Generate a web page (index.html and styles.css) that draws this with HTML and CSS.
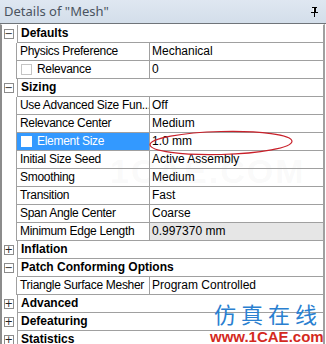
FILE: index.html
```html
<!DOCTYPE html>
<html lang="en">
<head>
    <meta charset="UTF-8">
    <title>Details of "Mesh"</title>
    <link rel="stylesheet" href="styles.css">
</head>
<body>
<div class="panel">
    <div class="title-bar">
        <span class="title">Details of "Mesh"</span>
        <svg class="pin" width="9" height="11" viewBox="0 0 9 11">
            <path d="M2 1h5v1h-1v4h2v1h-3v4h-1v-4h-3v-1h2v-4h-1z" fill="#000"/>
            <rect x="3" y="2" width="1" height="4" fill="#fff"/>
        </svg>
    </div>
    <div class="grid">
        <div class="row section"><span class="toggle">−</span><span class="cap">Defaults</span></div>
        <div class="row"><span class="gut"></span><span class="name">Physics Preference</span><span class="val">Mechanical</span></div>
        <div class="row"><span class="gut"></span><span class="name"><i class="check"></i>Relevance</span><span class="val">0</span></div>

        <div class="row section"><span class="toggle">−</span><span class="cap">Sizing</span></div>
        <div class="row"><span class="gut"></span><span class="name">Use Advanced Size Fun...</span><span class="val">Off</span></div>
        <div class="row"><span class="gut"></span><span class="name">Relevance Center</span><span class="val">Medium</span></div>
        <div class="row"><span class="gut"></span><span class="name selected"><i class="check"></i>Element Size</span><span class="val">1.0 mm</span></div>
        <div class="row"><span class="gut"></span><span class="name">Initial Size Seed</span><span class="val">Active Assembly</span></div>
        <div class="row"><span class="gut"></span><span class="name">Smoothing</span><span class="val">Medium</span></div>
        <div class="row"><span class="gut"></span><span class="name">Transition</span><span class="val">Fast</span></div>
        <div class="row"><span class="gut"></span><span class="name">Span Angle Center</span><span class="val">Coarse</span></div>
        <div class="row"><span class="gut"></span><span class="name">Minimum Edge Length</span><span class="val readonly">0.997370 mm</span></div>

        <div class="row section"><span class="toggle">+</span><span class="cap">Inflation</span></div>
        <div class="row section"><span class="toggle">−</span><span class="cap">Patch Conforming Options</span></div>
        <div class="row"><span class="gut"></span><span class="name">Triangle Surface Mesher</span><span class="val">Program Controlled</span></div>
        <div class="row section"><span class="toggle">+</span><span class="cap">Advanced</span></div>
        <div class="row section"><span class="toggle">+</span><span class="cap">Defeaturing</span></div>
        <div class="row section"><span class="toggle">+</span><span class="cap">Statistics</span></div>
    </div>

    <svg class="mark-ellipse" width="150" height="28" viewBox="0 0 150 28">
        <ellipse cx="74" cy="14" rx="71" ry="11.5" fill="none" stroke="#c8202a" stroke-width="1.2" transform="rotate(-1.5 74 14)"/>
    </svg>
    <div class="wm-faint">1CAE.COM</div>
    <div class="wm-cn">仿真在线</div>
    <div class="wm-url">www.1CAE.com</div>
</div>
</body>
</html>
```

FILE: styles.css
```css
* {
    margin: 0;
    padding: 0;
    box-sizing: border-box;
}

body {
    background: #ffffff;
    font-family: "Liberation Sans", Arial, sans-serif;
    font-size: 12px;
    color: #000000;
}

.panel {
    position: relative;
    width: 326px;
    height: 344px;
    overflow: hidden;
}

.title-bar {
    height: 24px;
    display: flex;
    align-items: center;
    justify-content: space-between;
    padding: 0 7px 1px 4px;
    background: linear-gradient(#dfe7f1, #d3deea);
    border-bottom: 1px solid #6f7479;
}

.title {
    font-family: "Noto Sans", sans-serif;
    font-size: 13px;
    color: #4a5360;
}

.pin {
    margin-top: 1px;
}

.grid {
    width: 325px;
    border-top: 1px solid #ffffff;
    border-left: 2px solid #8c8c8c;
    border-right: 2px solid #a0a0a0;
}

.row {
    display: grid;
    grid-template-columns: 15px 133px 1fr;
    height: 18px;
}

.gut {
    border-right: 1px solid #a0a0a0;
}

.name,
.val,
.cap {
    display: flex;
    align-items: center;
    border-bottom: 1px solid #a0a0a0;
    white-space: nowrap;
    overflow: hidden;
    padding-left: 3px;
    line-height: 17px;
}

.name {
    border-right: 1px solid #a0a0a0;
    letter-spacing: -0.3px;
}

.val {
    padding-left: 2px;
}

.readonly {
    background: #e6e6e6;
}

.selected {
    background: #3399ff;
    color: #ffffff;
}

.check {
    display: inline-block;
    width: 11px;
    height: 11px;
    margin: 0 5px 0 1px;
    border: 1px solid #c4c4c4;
    background: #ffffff;
}

.selected .check {
    border-color: #ffffff;
}

.section .cap {
    grid-column: 2 / 4;
    font-weight: bold;
    border-left: 1px solid #a0a0a0;
}

.toggle {
    align-self: center;
    justify-self: center;
    width: 10px;
    height: 10px;
    margin-left: -2px;
    border: 1px solid #8c8c8c;
    background: #ffffff;
    font-size: 10px;
    line-height: 8px;
    text-align: center;
    color: #222222;
    font-family: "DejaVu Sans", sans-serif;
}

.mark-ellipse {
    position: absolute;
    left: 147px;
    top: 129px;
}

.wm-faint {
    position: absolute;
    left: 110px;
    top: 152px;
    font-size: 34px;
    font-weight: bold;
    color: rgba(180, 180, 180, 0.08);
    letter-spacing: 2px;
}

.wm-cn {
    position: absolute;
    left: 214px;
    top: 297px;
    font-family: "Noto Sans CJK SC", sans-serif;
    font-size: 22px;
    letter-spacing: 5px;
    color: #2a7fd0;
}

.wm-url {
    position: absolute;
    left: 210px;
    top: 328px;
    font-size: 15px;
    font-weight: bold;
    color: #d42a1e;
}
```
